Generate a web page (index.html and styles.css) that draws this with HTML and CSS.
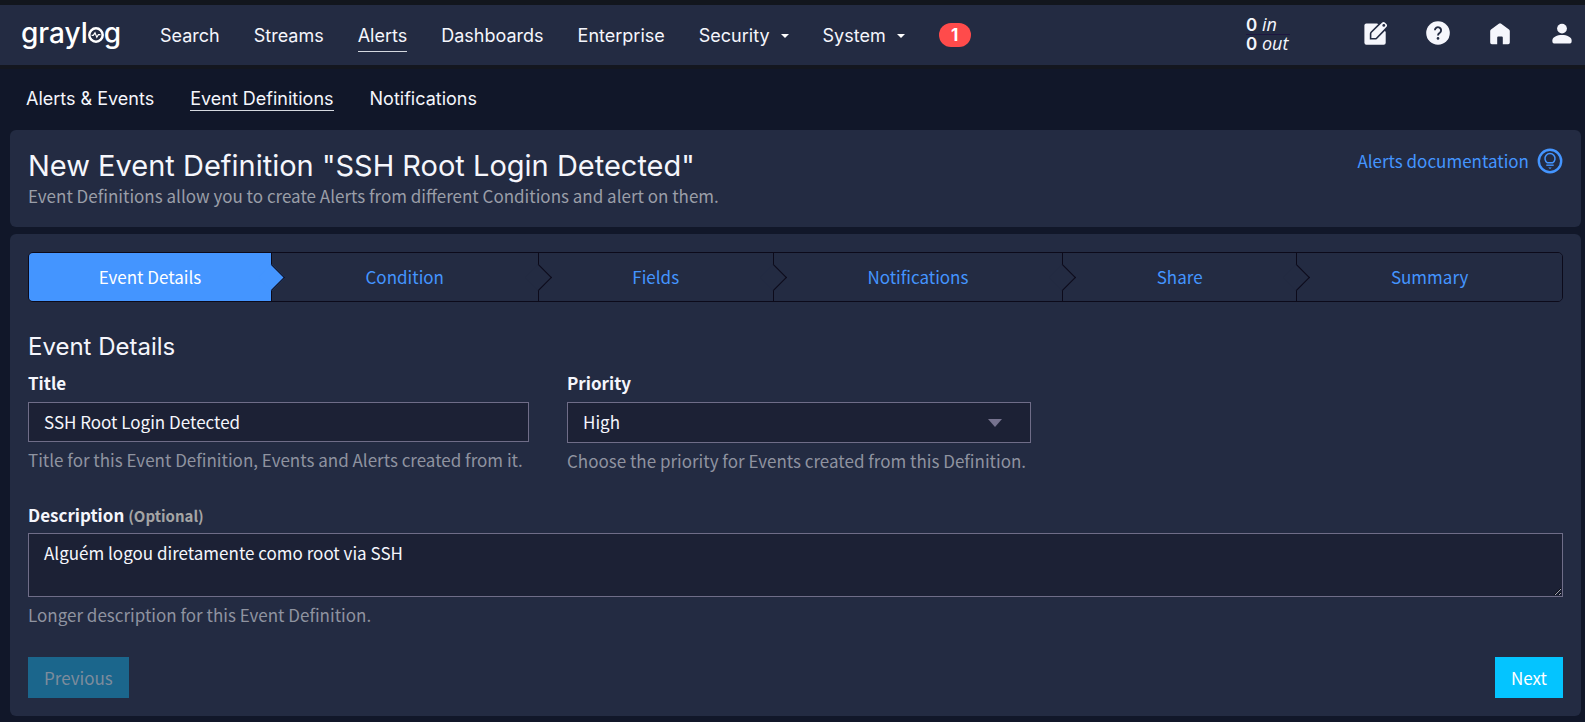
FILE: index.html
```html
<!DOCTYPE html>
<html lang="en">
<head>
  <meta charset="UTF-8" />
  <meta name="viewport" content="width=device-width, initial-scale=1" />
  <title>Graylog - New Event Definition</title>
  <link rel="stylesheet" href="styles.css">
</head>
<body>
  <header class="navbar">
    <a class="brand" href="#" aria-label="graylog">grayl<svg class="brand-o" viewBox="0 0 16 16" fill="none" stroke="currentColor"><circle cx="8" cy="8" r="6.7" stroke-width="2.5"/><path d="M3.600 8.400h1.600l1.800-2.600 1.800 4.400 1.600-2.600h2" stroke-width="1.200"/></svg>g</a>

    <nav class="main-nav">
      <a href="#">Search</a>
      <a href="#">Streams</a>
      <a href="#" class="active">Alerts</a>
      <a href="#">Dashboards</a>
      <a href="#">Enterprise</a>
      <a href="#">Security <span class="caret"></span></a>
      <a href="#">System <span class="caret"></span></a>
      <a href="#" class="badge">1</a>
    </nav>

    <div class="throughput">
      <div><strong>0</strong> <i>in</i></div>
      <div><strong>0</strong> <i>out</i></div>
    </div>

    <div class="nav-icons">
      <a href="#" aria-label="Scratchpad">
        <svg viewBox="0 0 24 24"><rect x="0.400" y="2.400" width="21.300" height="21.300" rx="2" fill="currentColor"/><path d="M13 2h9v9z" fill="#232b42"/><path d="M6.600 17.800v-5c0-.6.200-1.100.6-1.500L17.400 1.100a3 3 0 0 1 4.200 0l1.300 1.300a3 3 0 0 1 0 4.200L12.600 17.200c-.4.400-.9.600-1.500.6z" fill="currentColor" stroke="#232b42" stroke-width="1.600"/><circle cx="19.800" cy="4.400" r="1.400" fill="#232b42"/></svg>
      </a>
      <a href="#" aria-label="Help">
        <svg viewBox="0 0 24 24"><circle cx="12" cy="12" r="11.8" fill="currentColor"/><path d="M8.900 9.200a3.100 3.100 0 1 1 4.900 2.600c-1.200.8-1.800 1.400-1.800 2.600" fill="none" stroke="#232b42" stroke-width="1.900"/><circle cx="12" cy="17.400" r="1.300" fill="#232b42"/></svg>
      </a>
      <a href="#" aria-label="Home">
        <svg viewBox="0 0 24 24"><path fill="currentColor" d="M2.200 10c0-.6.300-1.200.8-1.600l7.800-5.600a2 2 0 0 1 2.400 0L21 8.400c.5.400.8 1 .8 1.600v11.600a1.600 1.600 0 0 1-1.600 1.600h-5.400v-6.800a1 1 0 0 0-1-1h-3.600a1 1 0 0 0-1 1v6.800H3.800a1.600 1.600 0 0 1-1.600-1.600z"/></svg>
      </a>
      <a href="#" aria-label="User">
        <svg viewBox="0 0 24 24"><circle cx="12" cy="7.600" r="4.900" fill="currentColor"/><path fill="currentColor" d="M2.400 19.200c0-3.200 4.800-5.200 9.600-5.200s9.600 2 9.600 5.200v1.600a1.600 1.600 0 0 1-1.600 1.600H4a1.600 1.600 0 0 1-1.600-1.600z"/></svg>
      </a>
    </div>
  </header>

  <nav class="sub-nav">
    <a href="#">Alerts &amp; Events</a>
    <a href="#" class="active">Event Definitions</a>
    <a href="#">Notifications</a>
  </nav>

  <main>
    <section class="card page-header">
      <div>
        <h1>New Event Definition "SSH Root Login Detected"</h1>
        <p>Event Definitions allow you to create Alerts from different Conditions and alert on them.</p>
      </div>
      <a class="doc-link" href="#">Alerts documentation
        <svg viewBox="0 0 26 26" fill="none" stroke="currentColor"><circle cx="13" cy="13" r="11.2" stroke-width="2.4"/><path d="M10.400 14.800a5 5 0 1 1 5.200 0z" stroke-width="1.500"/><path d="M9.300 17.200h7.400" stroke-width="1.400"/><path d="M11.200 19.600h3.600l-1.800 1.400z" fill="currentColor" stroke="none"/></svg>
      </a>
    </section>

    <section class="card">
      <div class="steps">
        <button type="button" class="step active">Event Details</button>
        <button type="button" class="step">Condition</button>
        <button type="button" class="step">Fields</button>
        <button type="button" class="step">Notifications</button>
        <button type="button" class="step">Share</button>
        <button type="button" class="step">Summary</button>
      </div>

      <h2>Event Details</h2>

      <form>
        <div class="form-row">
          <div class="form-group">
            <label for="title">Title</label>
            <input type="text" id="title" name="title" value="SSH Root Login Detected">
            <span class="help">Title for this Event Definition, Events and Alerts created from it.</span>
          </div>
          <div class="form-group">
            <label for="priority">Priority</label>
            <div class="select-wrap">
              <select id="priority" name="priority">
                <option>Low</option>
                <option>Medium</option>
                <option selected>High</option>
              </select>
            </div>
            <span class="help">Choose the priority for Events created from this Definition.</span>
          </div>
        </div>

        <div class="form-group">
          <label for="description">Description <small>(Optional)</small></label>
          <textarea id="description" name="description">Alguém logou diretamente como root via SSH</textarea>
          <span class="help">Longer description for this Event Definition.</span>
        </div>

        <div class="form-actions">
          <button type="button" class="btn" disabled>Previous</button>
          <button type="button" class="btn">Next</button>
        </div>
      </form>
    </section>
  </main>
</body>
</html>
```
FILE: styles.css
```css
* {
  box-sizing: border-box;
}

body {
  margin: 0;
  background: #111729;
  border-top: 5px solid #12161d;
  color: #f5f6fc;
  font-family: "Noto Sans CJK SC", "Noto Sans", sans-serif;
  font-size: 17px;
  line-height: 25px;
}

a {
  color: inherit;
  text-decoration: none;
}

/* top bar */
.navbar {
  display: flex;
  align-items: center;
  height: 60px;
  padding: 0 11px 0 21px;
  background: #232b42;
  box-shadow: 0 4px 0 #14171f;
  font-family: Inter, sans-serif;
  font-size: 18px;
}

.brand {
  display: flex;
  align-items: baseline;
  width: 98px;
  padding-bottom: 4px;
  font-size: 28px;
  line-height: 36px;
  font-weight: 500;
  color: #fff;
}

.brand-o {
  flex: none;
  width: 16px;
  height: 16px;
}

.main-nav {
  display: flex;
  align-items: center;
  gap: 34px;
  margin-left: 41px;
}

.main-nav a,
.sub-nav a {
  border-bottom: 1px solid transparent;
}

.main-nav a {
  padding-top: 2px;
  line-height: 31px;
}

.main-nav .active,
.sub-nav .active {
  border-color: #d5d9df;
}

.caret {
  display: inline-block;
  margin-left: 6px;
  vertical-align: 4px;
  border: 4px solid transparent;
  border-top-color: #fff;
  border-bottom: 0;
}

.main-nav .badge {
  width: 32px;
  padding: 0;
  border: 0;
  border-radius: 12px;
  background: #ff4b4b;
  color: #fff;
  font-weight: 700;
  font-size: 17px;
  line-height: 24px;
  text-align: center;
}

.throughput {
  margin-left: auto;
  width: 48px;
  padding: 0 0 2px 4px;
  font-family: "Open Sans", sans-serif;
  line-height: 17px;
  white-space: nowrap;
}

.throughput div + div {
  border-top: 1px solid #1e1640;
}

.throughput strong {
  font-family: Inter, sans-serif;
  font-size: 17px;
  font-weight: 600;
}

.nav-icons {
  display: flex;
  gap: 38px;
  margin-left: 74px;
  padding-bottom: 4px;
}

.nav-icons svg {
  display: block;
  width: 24px;
  height: 24px;
}

.sub-nav {
  display: flex;
  gap: 36px;
  padding: 22px 26px 19px;
  font-family: Inter, sans-serif;
  font-size: 18px;
  line-height: 23px;
}

/* content */
main {
  padding: 0 4px 6px 10px;
}

.card {
  padding: 18px;
  border-radius: 6px;
  background: #232b42;
}

.card + .card {
  margin-top: 7px;
}

.page-header {
  display: flex;
  justify-content: space-between;
  align-items: flex-start;
}

h1,
h2 {
  margin: 0;
  font-family: Inter, sans-serif;
  font-weight: 400;
}

h1 {
  font-size: 29px;
  line-height: 35px;
}

.page-header p {
  margin: 0 0 1px;
  color: #9a9ea8;
}

.doc-link {
  display: flex;
  gap: 8px;
  color: #4495ff;
}

.doc-link svg {
  width: 26px;
  height: 26px;
}

.steps {
  display: flex;
  border: 1px solid #0c0a1a;
  border-radius: 5px;
}

.step {
  position: relative;
  flex: 1 1 auto;
  height: 48px;
  padding: 0 48px 1px;
  border: 0;
  border-right: 1px solid #0c0a1a;
  background: #232b42;
  color: #4495ff;
  font: inherit;
  cursor: pointer;
}

.step:first-child {
  padding: 0 24px 1px;
  border-radius: 4px 0 0 4px;
}

.step:last-child {
  border-right: 0;
  border-radius: 0 4px 4px 0;
}

.step.active {
  background: #4495ff;
  color: #fff;
}

/* arrow pointing at the next step */
.step:not(:last-child)::after {
  content: "";
  position: absolute;
  top: 15px;
  right: -10px;
  z-index: 1;
  width: 18px;
  height: 18px;
  border: 1px solid #0c0a1a;
  border-width: 1px 1px 0 0;
  background: #232b42;
  transform: rotate(45deg);
}

.step.active::after {
  background: #4495ff;
}

h2 {
  margin-top: 30px;
  font-size: 24px;
  line-height: 30px;
}

.form-row {
  display: grid;
  grid-template-columns: 501px 464px;
  gap: 38px;
  margin-bottom: 21px;
}

.form-group {
  display: flex;
  flex-direction: column;
}

label {
  margin: 8px 0 7px;
  font-weight: 700;
}

label small {
  font-size: 15px;
  color: #a5a5a5;
}

.form-row + .form-group label {
  margin-bottom: 5px;
}

input,
select,
textarea {
  width: 100%;
  height: 40px;
  padding: 0 15px 1px;
  border: 1px solid #6f6d88;
  border-radius: 0;
  background: #1c2135;
  color: #f5f6fc;
  font: inherit;
}

.select-wrap {
  position: relative;
}

.select-wrap::after {
  content: "";
  position: absolute;
  top: 17px;
  right: 29px;
  border: 7px solid transparent;
  border-top: 8px solid #76738f;
  border-bottom: 0;
  pointer-events: none;
}

select {
  display: block;
  height: 41px;
  padding-bottom: 2px;
  appearance: none;
}

textarea {
  height: 64px;
  padding: 6px 15px;
}

.help {
  margin-top: 5px;
  color: #8f93a0;
}

.form-actions {
  display: flex;
  justify-content: space-between;
  margin-top: 30px;
}

.btn {
  height: 41px;
  padding: 0 16px;
  border: 0;
  background: #04c4ff;
  color: #fff;
  font: inherit;
  cursor: pointer;
}

.btn:disabled {
  background: #1b668c;
  color: #7d8c9c;
  cursor: default;
}
```
